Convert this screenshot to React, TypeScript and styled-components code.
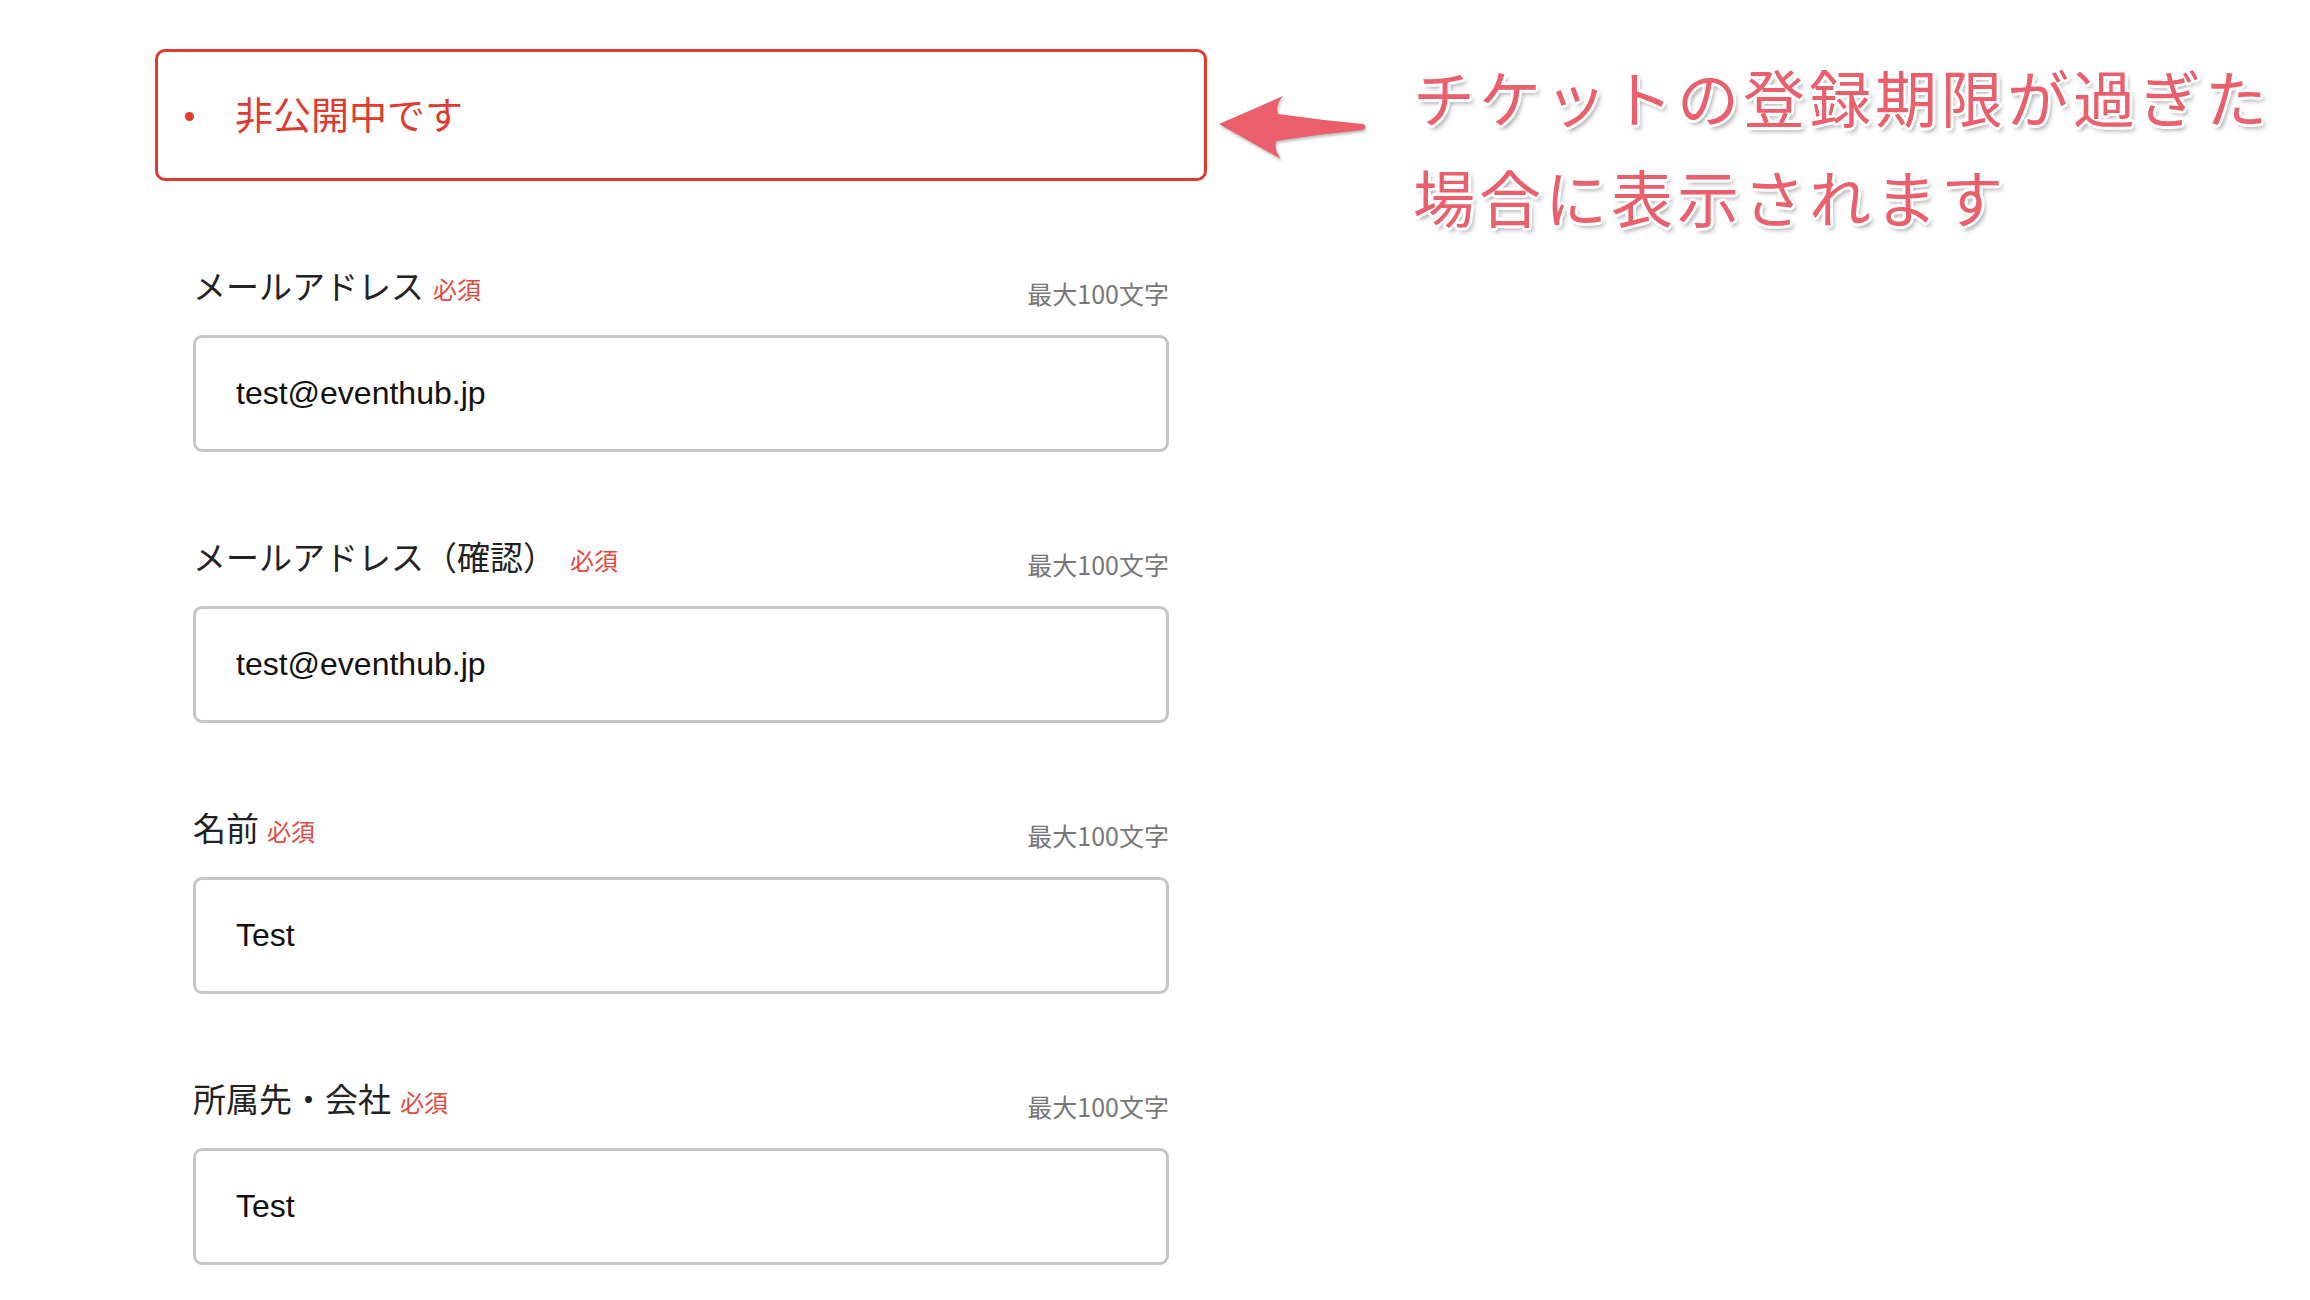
import React from 'react';
import styled, { createGlobalStyle } from 'styled-components';

const GlobalStyle = createGlobalStyle`
  html, body {
    margin: 0;
    background: #ffffff;
  }
  body {
    font-family: "Noto Sans CJK JP", "Noto Sans", sans-serif;
  }
`;

const Page = styled.div`
  display: flex;
  align-items: flex-start;
  padding-top: 49px;
  width: 2310px;
  height: 1300px;
  box-sizing: border-box;
  overflow: hidden;
`;

const FormColumn = styled.div`
  width: 1052px;
  margin-left: 155px;
  display: flex;
  flex-direction: column;
`;

const Alert = styled.div`
  height: 132px;
  box-sizing: border-box;
  border: 3.5px solid #e03a2f;
  border-radius: 10px;
  display: flex;
  align-items: center;
  padding-left: 27px;
  padding-bottom: 5px;
`;

const Bullet = styled.span`
  width: 9px;
  height: 9px;
  border-radius: 50%;
  background: #e03a2f;
  margin-right: 41px;
  margin-top: 8px;
`;

const AlertText = styled.span`
  font-size: 38px;
  color: #e03a2f;
  line-height: 1;
`;

const Fields = styled.div`
  display: flex;
  flex-direction: column;
  padding: 82px 38px 0 38px;
`;

const Field = styled.div`
  display: flex;
  flex-direction: column;
  margin-bottom: 82px;
`;

const LabelRow = styled.div`
  display: flex;
  align-items: baseline;
  height: 48px;
  line-height: 44px;
  margin-bottom: 24px;
`;

const Label = styled.label`
  font-size: 33px;
  color: #222222;
`;

const Required = styled.span`
  font-size: 24px;
  color: #e5483e;
  margin-left: ${(p: { gap?: number }) => p.gap ?? 10}px;
`;

const Hint = styled.span`
  margin-left: auto;
  font-size: 25px;
  color: #777777;
  position: relative;
  top: 5px;
`;

const TextInput = styled.input`
  height: 117px;
  box-sizing: border-box;
  border: 3.5px solid #c6c6c6;
  border-radius: 9px;
  padding: 0 0 0 40px;
  font-family: "Liberation Sans", Arial, sans-serif;
  font-size: 32px;
  color: #111111;
  background: #ffffff;
  outline: none;
`;

const Annotation = styled.div`
  display: flex;
  align-items: flex-start;
  margin-left: 11px;
`;

const ArrowMark = styled.svg`
  margin-top: 44px;
  flex-shrink: 0;
  filter: drop-shadow(1px 2px 1.5px rgba(0, 0, 0, 0.28));
`;

const Note = styled.div`
  margin-left: 43px;
  margin-top: -3px;
  font-size: 62px;
  line-height: 100px;
  letter-spacing: 4px;
  color: #ea5f6b;
  white-space: nowrap;
  text-shadow:
    3px 0 0 #fff, -3px 0 0 #fff, 0 3px 0 #fff, 0 -3px 0 #fff,
    2px 2px 0 #fff, -2px -2px 0 #fff, 2px -2px 0 #fff, -2px 2px 0 #fff,
    3px 4px 5px rgba(0, 0, 0, 0.4);
`;

const fields = [
  { label: 'メールアドレス', value: 'test@eventhub.jp', gap: 9 },
  { label: 'メールアドレス（確認）', value: 'test@eventhub.jp', gap: 14 },
  { label: '名前', value: 'Test', gap: 8 },
  { label: '所属先・会社', value: 'Test', gap: 9 },
];

function App() {
  return (
    <>
      <GlobalStyle />
      <Page>
        <FormColumn>
          <Alert>
            <Bullet />
            <AlertText>非公開中です</AlertText>
          </Alert>
          <Fields>
            {fields.map((f) => (
              <Field key={f.label}>
                <LabelRow>
                  <Label>{f.label}</Label>
                  <Required gap={f.gap}>必須</Required>
                  <Hint>最大100文字</Hint>
                </LabelRow>
                <TextInput defaultValue={f.value} />
              </Field>
            ))}
          </Fields>
        </FormColumn>
        <Annotation>
          <ArrowMark width="152" height="68" viewBox="0 0 152 68">
            <path
              d="M1 31 L65 3 Q57 12 60 21 Q102 27 145 31 Q150 33.5 145 37 Q102 41 58 48 Q56 57 63 66 Z"
              fill="#ea5f6b"
            />
          </ArrowMark>
          <Note>
            チケットの登録期限が過ぎた
            <br />
            場合に表示されます
          </Note>
        </Annotation>
      </Page>
    </>
  );
}

export default App;
